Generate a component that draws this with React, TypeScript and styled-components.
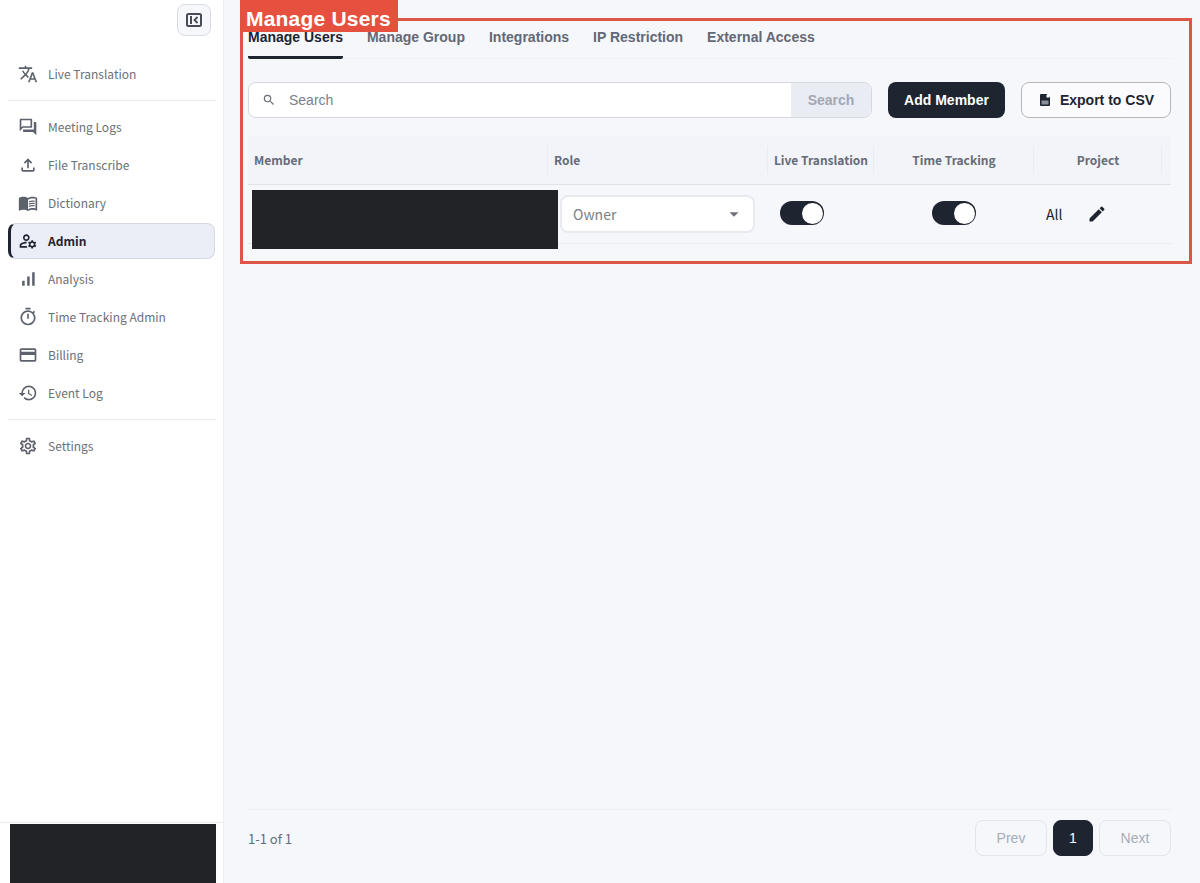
import React from 'react';
import styled, { createGlobalStyle } from 'styled-components';
import {
  MdTranslate,
  MdOutlineQuestionAnswer,
  MdOutlineFileUpload,
  MdMenuBook,
  MdOutlineManageAccounts,
  MdSignalCellularAlt,
  MdOutlineTimer,
  MdOutlineCreditCard,
  MdHistory,
  MdOutlineSettings,
  MdEdit,
  MdArrowDropDown,
  MdSearch,
} from 'react-icons/md';

const GlobalStyle = createGlobalStyle`
  html, body {
    margin: 0;
    height: 883px;
    overflow: hidden;
    background: #f5f7fb;
  }
  * {
    box-sizing: border-box;
  }
`;

const cjk = `"Noto Sans CJK JP", "Noto Sans", sans-serif`;
const arial = `"Liberation Sans", Arial, sans-serif`;
const columns = '300px 220px 106px 160px 128px 9px';

const Page = styled.div`
  display: flex;
  width: 1200px;
  height: 883px;
  position: relative;
  font-family: ${cjk};
`;

const Sidebar = styled.aside`
  width: 224px;
  flex: none;
  display: flex;
  flex-direction: column;
  background: #fff;
  border-right: 1px solid #eceef3;
`;

const SidebarTop = styled.div`
  display: flex;
  justify-content: flex-end;
  padding: 4px 12px 0 0;
  margin-bottom: 19px;
`;

const CollapseButton = styled.button`
  width: 34px;
  height: 32px;
  padding: 0;
  display: flex;
  align-items: center;
  justify-content: center;
  background: #f5f7fb;
  border: 1px solid #d8dbe3;
  border-radius: 8px;
`;

const Nav = styled.nav`
  flex: 1;
  display: flex;
  flex-direction: column;
  padding: 0 8px;
`;

const NavItem = styled.div<{ $active?: boolean }>`
  height: 36px;
  margin: 1px 0;
  flex: none;
  width: 207px;
  display: flex;
  align-items: center;
  gap: 10px;
  padding-left: ${(p) => (p.$active ? '7px' : '10px')};
  padding-bottom: 1px;
  font-size: 12px;
  font-weight: ${(p) => (p.$active ? 700 : 400)};
  color: ${(p) => (p.$active ? '#1e2430' : '#6b7078')};
  background: ${(p) => (p.$active ? '#ebeef6' : 'transparent')};
  border: ${(p) => (p.$active ? '1px solid #d5d8e0' : 'none')};
  border-left: ${(p) => (p.$active ? '3px solid #1e2430' : 'none')};
  border-radius: 8px;

  svg {
    width: 20px;
    height: 20px;
    flex: none;
    color: ${(p) => (p.$active ? '#1e2430' : '#5c616b')};
  }
`;

const NavDivider = styled.div`
  height: 1px;
  width: 208px;
  flex: none;
  background: #e8eaee;
  margin: 7px 0;
`;

const SidebarFooter = styled.div`
  height: 61px;
  flex: none;
  border-top: 1px solid #e8eaee;
  padding: 1px 7px 0 10px;
`;

const Redacted = styled.div`
  height: 100%;
  background: #212327;
`;

const Main = styled.main`
  flex: 1;
  display: flex;
  flex-direction: column;
  padding: 0 29px 27px 24px;
  background: #f5f7fb;
`;

const Tabs = styled.div`
  height: 59px;
  padding-top: 27px;
  flex: none;
  display: flex;
  gap: 24px;
  border-bottom: 1px solid #eef0f5;
`;

const Tab = styled.div<{ $active?: boolean }>`
  height: 32px;
  font-family: ${arial};
  font-size: 14px;
  font-weight: 700;
  line-height: 20px;
  color: ${(p) => (p.$active ? '#1e2430' : '#636875')};
  border-bottom: ${(p) => (p.$active ? '3px solid #1e2430' : 'none')};
  border-radius: 0 0 2px 2px;
`;

const Toolbar = styled.div`
  margin-top: 23px;
  height: 36px;
  flex: none;
  display: flex;
  gap: 16px;
`;

const SearchGroup = styled.div`
  width: 624px;
  display: flex;
  overflow: hidden;
  background: #fff;
  border: 1px solid #d5d8e0;
  border-radius: 8px;
`;

const SearchField = styled.div`
  flex: 1;
  display: flex;
  align-items: center;
  gap: 13px;
  padding-left: 13px;
  font-family: ${arial};
  font-size: 14px;
  color: #7b808a;

  svg {
    width: 14px;
    height: 14px;
    color: #6b7078;
  }
`;

const SearchButton = styled.div`
  width: 80px;
  display: flex;
  align-items: center;
  justify-content: center;
  background: #e9ecf3;
  font-family: ${arial};
  font-size: 14px;
  font-weight: 700;
  color: #a3a7b3;
`;

const PrimaryButton = styled.div`
  width: 117px;
  display: flex;
  align-items: center;
  justify-content: center;
  background: #1e2430;
  border-radius: 8px;
  font-family: ${arial};
  font-size: 14px;
  font-weight: 700;
  color: #fff;
`;

const OutlineButton = styled.div`
  width: 150px;
  display: flex;
  align-items: center;
  justify-content: center;
  gap: 10px;
  padding-left: 2px;
  background: #fbfbfd;
  border: 1px solid #b4b6bc;
  border-radius: 8px;
  font-family: ${arial};
  font-size: 14px;
  font-weight: 700;
  color: #1e2430;
`;

const Table = styled.div`
  margin-top: 18px;
  flex: 1;
  width: 923px;
`;

const HeaderRow = styled.div`
  display: grid;
  grid-template-columns: ${columns};
  height: 49px;
  background: #f2f4f9;
  border-bottom: 1px solid #dfe2e8;
`;

const HeaderCell = styled.div<{ $center?: boolean; $plain?: boolean }>`
  display: flex;
  align-items: center;
  justify-content: ${(p) => (p.$center ? 'center' : 'flex-start')};
  padding-left: ${(p) => (p.$center ? '0' : '6px')};
  padding-bottom: 2px;
  font-size: 12px;
  font-weight: 700;
  color: #666b78;
  position: relative;

  &::after {
    content: ${(p) => (p.$plain ? 'none' : '""')};
    position: absolute;
    right: 0;
    top: 10px;
    bottom: 10px;
    width: 1px;
    background: #eaecf1;
  }
`;

const BodyRow = styled.div`
  display: grid;
  grid-template-columns: ${columns};
  height: 59px;
  position: relative;
  border-bottom: 1px solid #e8eaee;
`;

const MemberCover = styled.div`
  position: absolute;
  left: 4px;
  top: 5px;
  width: 306px;
  height: 59px;
  background: #212327;
`;

const RoleCell = styled.div`
  position: relative;
  padding: 10px 0 0 12px;
`;

const RoleSelect = styled.div`
  width: 195px;
  height: 38px;
  display: flex;
  align-items: center;
  justify-content: space-between;
  padding: 0 8px 0 11px;
  background: #fff;
  border: 2px solid #e8eaef;
  border-radius: 8px;
  font-size: 14px;
  color: #7b7f87;

  svg {
    width: 22px;
    height: 22px;
    color: #6e7178;
  }
`;

const ToggleCell = styled.div<{ $center?: boolean }>`
  display: flex;
  padding-top: 16px;
  padding-left: ${(p) => (p.$center ? '0' : '12px')};
  justify-content: ${(p) => (p.$center ? 'center' : 'flex-start')};
`;

const Toggle = styled.div`
  width: 44px;
  height: 24px;
  padding: 1.5px 1px 1.5px 0;
  display: flex;
  justify-content: flex-end;
  background: #1e2430;
  border-radius: 12px;

  &::after {
    content: '';
    width: 21px;
    height: 21px;
    background: #fff;
    border-radius: 50%;
  }
`;

const ProjectCell = styled.div`
  display: flex;
  align-items: flex-start;
  gap: 25px;
  padding: 19px 0 0 12px;
  font-size: 14px;
  line-height: 20px;
  color: #212327;

  svg {
    width: 20px;
    height: 20px;
    color: #1e2430;
  }
`;

const Footer = styled.div`
  height: 47px;
  flex: none;
  display: flex;
  align-items: flex-end;
  justify-content: space-between;
  border-top: 1px solid #eceef3;
  padding-top: 11px;
`;

const PageCount = styled.div`
  height: 35px;
  display: flex;
  align-items: center;
  font-size: 13px;
  color: #666b74;
`;

const Pager = styled.div`
  display: flex;
  gap: 6px;
`;

const PagerButton = styled.div<{ $current?: boolean }>`
  width: ${(p) => (p.$current ? '40px' : '72px')};
  height: 36px;
  display: flex;
  align-items: center;
  justify-content: center;
  font-family: ${arial};
  font-size: 14px;
  color: ${(p) => (p.$current ? '#fff' : '#a8acb6')};
  background: ${(p) => (p.$current ? '#1e2430' : 'transparent')};
  border: 1px solid ${(p) => (p.$current ? '#1e2430' : '#e2e5eb')};
  border-radius: 8px;
`;

const Highlight = styled.div`
  position: absolute;
  left: 240px;
  top: 18px;
  width: 952px;
  height: 246px;
  border: 3px solid #dc5547;
  pointer-events: none;
`;

const HighlightLabel = styled.div`
  position: absolute;
  left: 240px;
  top: 0;
  width: 158px;
  height: 32px;
  padding-left: 6px;
  background: #e6513f;
  font-family: ${arial};
  font-size: 21px;
  font-weight: 700;
  letter-spacing: 0.2px;
  line-height: 37px;
  color: #fff;
  overflow: hidden;
`;

const CollapseIcon = () => (
  <svg width="16" height="14" viewBox="0 0 16 14" fill="none">
    <rect x="1" y="1" width="14" height="12" rx="1.5" stroke="#464b57" strokeWidth="2" />
    <path d="M5 3v8" stroke="#464b57" strokeWidth="2" />
    <path d="M11.5 4 8.5 7l3 3" stroke="#464b57" strokeWidth="1.8" />
  </svg>
);

const CsvIcon = () => (
  <svg width="10" height="12" viewBox="0 0 10 12">
    <path d="M1 0H6.5L10 3.5V11a1 1 0 0 1-1 1H1a1 1 0 0 1-1-1V1A1 1 0 0 1 1 0Z" fill="#1e2430" />
    <rect x="1.5" y="6.5" width="7" height="4" fill="#8b8f98" />
    <rect x="6.5" y="1" width="2.5" height="2.5" fill="#fff" />
  </svg>
);

const topNav = [{ label: 'Live Translation', icon: <MdTranslate /> }];

const mainNav = [
  { label: 'Meeting Logs', icon: <MdOutlineQuestionAnswer /> },
  { label: 'File Transcribe', icon: <MdOutlineFileUpload /> },
  { label: 'Dictionary', icon: <MdMenuBook /> },
  { label: 'Admin', icon: <MdOutlineManageAccounts />, active: true },
  { label: 'Analysis', icon: <MdSignalCellularAlt /> },
  { label: 'Time Tracking Admin', icon: <MdOutlineTimer /> },
  { label: 'Billing', icon: <MdOutlineCreditCard /> },
  { label: 'Event Log', icon: <MdHistory /> },
];

const tabs = ['Manage Users', 'Manage Group', 'Integrations', 'IP Restriction', 'External Access'];

export default function App() {
  return (
    <Page>
      <GlobalStyle />
      <Sidebar>
        <SidebarTop>
          <CollapseButton>
            <CollapseIcon />
          </CollapseButton>
        </SidebarTop>
        <Nav>
          {topNav.map((item) => (
            <NavItem key={item.label}>
              {item.icon}
              {item.label}
            </NavItem>
          ))}
          <NavDivider />
          {mainNav.map((item) => (
            <NavItem key={item.label} $active={item.active}>
              {item.icon}
              {item.label}
            </NavItem>
          ))}
          <NavDivider />
          <NavItem>
            <MdOutlineSettings />
            Settings
          </NavItem>
        </Nav>
        <SidebarFooter>
          <Redacted />
        </SidebarFooter>
      </Sidebar>
      <Main>
        <Tabs>
          {tabs.map((tab, i) => (
            <Tab key={tab} $active={i === 0}>
              {tab}
            </Tab>
          ))}
        </Tabs>
        <Toolbar>
          <SearchGroup>
            <SearchField>
              <MdSearch />
              Search
            </SearchField>
            <SearchButton>Search</SearchButton>
          </SearchGroup>
          <PrimaryButton>Add Member</PrimaryButton>
          <OutlineButton>
            <CsvIcon />
            Export to CSV
          </OutlineButton>
        </Toolbar>
        <Table>
          <HeaderRow>
            <HeaderCell>Member</HeaderCell>
            <HeaderCell>Role</HeaderCell>
            <HeaderCell $center>Live Translation</HeaderCell>
            <HeaderCell $center>Time Tracking</HeaderCell>
            <HeaderCell $center>Project</HeaderCell>
            <HeaderCell $plain />
          </HeaderRow>
          <BodyRow>
            <MemberCover />
            <div />
            <RoleCell>
              <RoleSelect>
                Owner
                <MdArrowDropDown />
              </RoleSelect>
            </RoleCell>
            <ToggleCell>
              <Toggle />
            </ToggleCell>
            <ToggleCell $center>
              <Toggle />
            </ToggleCell>
            <ProjectCell>
              All
              <MdEdit />
            </ProjectCell>
          </BodyRow>
        </Table>
        <Footer>
          <PageCount>1-1 of 1</PageCount>
          <Pager>
            <PagerButton>Prev</PagerButton>
            <PagerButton $current>1</PagerButton>
            <PagerButton>Next</PagerButton>
          </Pager>
        </Footer>
      </Main>
      <Highlight />
      <HighlightLabel>Manage Users</HighlightLabel>
    </Page>
  );
}
